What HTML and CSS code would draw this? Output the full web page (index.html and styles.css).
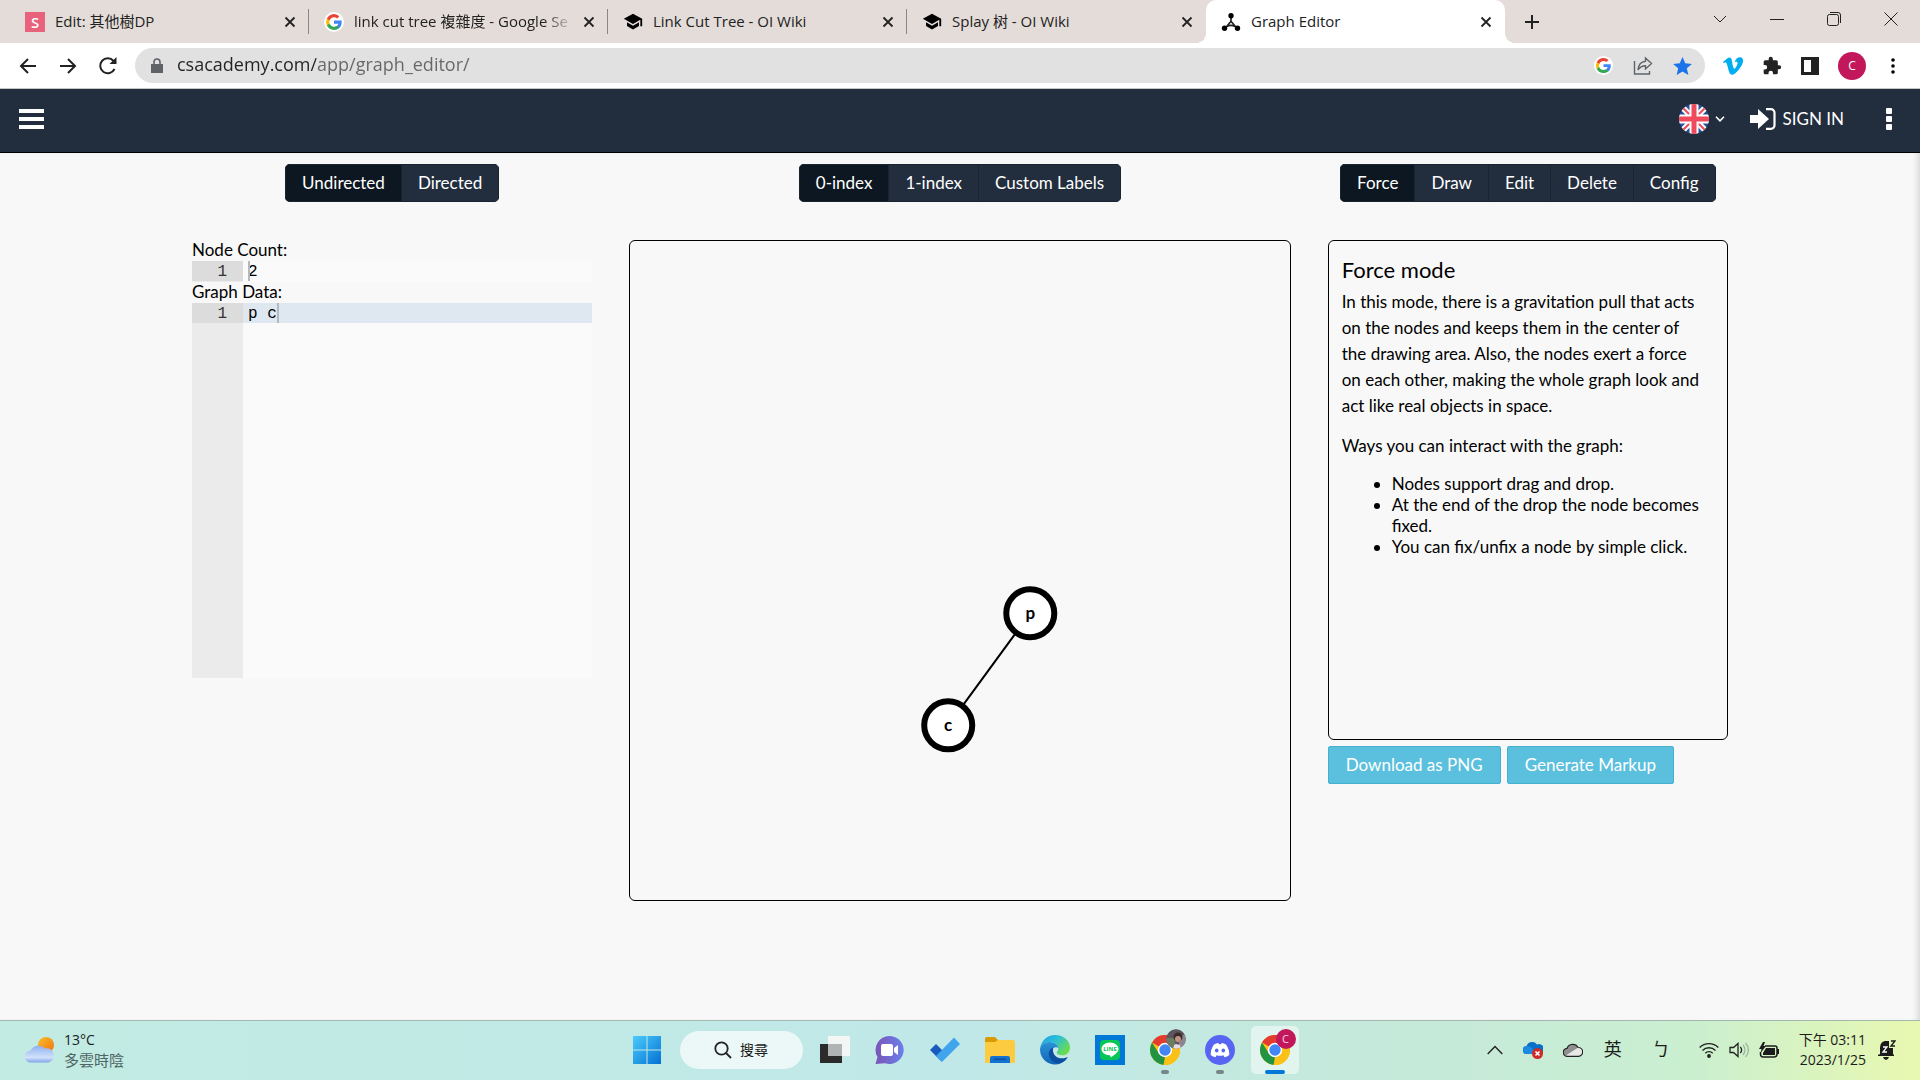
FILE: index.html
```html
<!DOCTYPE html>
<html lang="zh-Hant">
<head>
    <meta charset="UTF-8">
    <meta name="viewport" content="width=device-width, initial-scale=1.0">
    <title>Graph Editor</title>
    <link rel="stylesheet" href="styles.css">
</head>
<body>
    <!-- shared symbols -->
    <svg class="symbols" width="0" height="0" aria-hidden="true">
        <symbol id="google" viewBox="0 0 24 24">
            <circle cx="12" cy="12" r="12" fill="#fff"/>
            <path fill="#4285f4" d="M21.2 12.2c0-.7-.1-1.300-.2-1.900H12v3.700h5.200c-.2 1.200-.9 2.200-1.900 2.900v2.400h3.100c1.800-1.700 2.800-4.100 2.800-7.100z"/>
            <path fill="#34a853" d="M12 21.500c2.600 0 4.700-.9 6.300-2.300l-3.100-2.400c-.8.600-1.900.9-3.200.9-2.500 0-4.600-1.700-5.400-3.900H3.500v2.500C5 19.400 8.300 21.500 12 21.500z"/>
            <path fill="#fbbc05" d="M6.600 13.800a5.700 5.700 0 0 1 0-3.600V7.700H3.500a9.500 9.500 0 0 0 0 8.600l3.100-2.500z"/>
            <path fill="#ea4335" d="M12 6.300c1.400 0 2.700.5 3.700 1.400l2.700-2.700A9.500 9.500 0 0 0 3.500 7.700l3.100 2.500C7.400 8 9.500 6.300 12 6.300z"/>
        </symbol>
        <symbol id="cap" viewBox="0 0 24 24">
            <path d="M12 2 1 8.200l11 6.200 8.800-5V17H23V8.200L12 2z"/>
            <path d="M4.800 12.400v4.300L12 21l7.200-4.300v-4.300L12 16.600l-7.200-4.200z"/>
        </symbol>
        <symbol id="graph" viewBox="0 0 24 24">
            <path d="M12 4v7.500M12 11 4.500 20M12 11l7.500 9M7 17.500q5-3 10 0" fill="none" stroke="currentColor" stroke-width="2"/>
            <circle cx="12" cy="4.500" r="3.200"/>
            <circle cx="4.200" cy="19.500" r="3.200"/>
            <circle cx="19.800" cy="19.500" r="3.200"/>
        </symbol>
        <symbol id="close" viewBox="0 0 12 12">
            <path d="m1.500 1.500 9 9m0-9-9 9" fill="none" stroke="currentColor" stroke-width="1.800"/>
        </symbol>
        <symbol id="chrome" viewBox="0 0 30 30">
            <circle cx="15" cy="15" r="15" fill="#fbc116"/>
            <path fill="#e33b2e" d="M15 15 2 7.500a15 15 0 0 1 26 0z"/>
            <path fill="#229342" d="M2 7.500 8.900 18.500 15 22l-1.500 7.900A15 15 0 0 1 2 7.500z"/>
            <path fill="#fbc116" d="M15 8h13.200A15 15 0 0 1 13.500 30l7.500-12z"/>
            <circle cx="15" cy="15" r="7.200" fill="#fff"/>
            <circle cx="15" cy="15" r="5.700" fill="#4285f4"/>
        </symbol>
    </svg>

    <header class="browser">
        <div class="tab-strip">
            <div class="tab">
                <span class="favicon favicon-s">S</span>
                <span class="tab-title">Edit: 其他樹DP</span>
                <button class="tab-close" aria-label="Close tab"><svg width="12" height="12"><use href="#close"/></svg></button>
            </div>
            <div class="tab">
                <svg class="favicon" width="20" height="20"><use href="#google"/></svg>
                <span class="tab-title faded">link cut tree 複雜度 - Google Se</span>
                <button class="tab-close" aria-label="Close tab"><svg width="12" height="12"><use href="#close"/></svg></button>
            </div>
            <div class="tab">
                <svg class="favicon" width="20" height="20"><use href="#cap"/></svg>
                <span class="tab-title">Link Cut Tree - OI Wiki</span>
                <button class="tab-close" aria-label="Close tab"><svg width="12" height="12"><use href="#close"/></svg></button>
            </div>
            <div class="tab">
                <svg class="favicon" width="20" height="20"><use href="#cap"/></svg>
                <span class="tab-title">Splay 树 - OI Wiki</span>
                <button class="tab-close" aria-label="Close tab"><svg width="12" height="12"><use href="#close"/></svg></button>
            </div>
            <div class="tab active">
                <svg class="favicon" width="20" height="20"><use href="#graph"/></svg>
                <span class="tab-title">Graph Editor</span>
                <button class="tab-close" aria-label="Close tab"><svg width="12" height="12"><use href="#close"/></svg></button>
            </div>
            <button class="new-tab" aria-label="New tab">
                <svg width="16" height="16" viewBox="0 0 16 16"><path d="M8 1v14M1 8h14" stroke="#222" stroke-width="2"/></svg>
            </button>
            <div class="window-controls">
                <button aria-label="Search tabs"><svg width="14" height="14" viewBox="0 0 14 14"><path d="m1 4 6 6 6-6"/></svg></button>
                <button aria-label="Minimize"><svg width="14" height="14" viewBox="0 0 14 14"><path d="M0 7.500h14"/></svg></button>
                <button aria-label="Restore"><svg width="14" height="14" viewBox="0 0 14 14"><rect x=".5" y="2.500" width="11" height="11" rx="2"/><path d="M3 .5h8a2.500 2.500 0 0 1 2.500 2.500v8"/></svg></button>
                <button aria-label="Close"><svg width="14" height="14" viewBox="0 0 14 14"><path d="m.5.5 13 13m0-13-13 13"/></svg></button>
            </div>
        </div>

        <div class="toolbar">
            <div class="history">
                <button aria-label="Back"><svg width="20" height="20" viewBox="0 0 20 20"><path d="M18 10H3m7-7-7 7 7 7"/></svg></button>
                <button aria-label="Forward"><svg width="20" height="20" viewBox="0 0 20 20"><path d="M2 10h15m-7-7 7 7-7 7"/></svg></button>
                <button aria-label="Reload"><svg width="20" height="20" viewBox="0 0 20 20"><path d="M16.500 13A7.500 7.500 0 1 1 15.500 5l2 2"/><path d="M18.500 1v7h-7z" fill="#222" stroke="none"/></svg></button>
            </div>
            <div class="omnibox">
                <svg width="12" height="16" viewBox="0 0 12 16"><path d="M0 6h12v9H0z" fill="#5f6368"/><path d="M3 7V4a3 3 0 0 1 6 0v3" fill="none" stroke="#5f6368" stroke-width="1.600"/></svg>
                <input class="url" type="text" aria-label="Address" value="csacademy.com/app/graph_editor/">
                <button aria-label="Google"><svg width="19" height="19"><use href="#google"/></svg></button>
                <button aria-label="Share"><svg width="20" height="20" viewBox="0 0 20 20" fill="none" stroke="#5f6368" stroke-width="1.400"><path d="M1.500 5v13h15v-3"/><path d="M12.500 2 18.500 7.500l-6 5.500V9.800C8.500 9.800 6.500 11.500 5 14c.3-4.500 2.500-8.300 7.500-8.800z"/></svg></button>
                <button aria-label="Bookmark"><svg width="19" height="18" viewBox="0 0 24 23"><path fill="#1a73e8" d="m12 0 3.500 8 8.500.8-6.500 5.700 2 8.500L12 18.500 4.500 23l2-8.500L0 8.800 8.500 8z"/></svg></button>
            </div>
            <div class="extensions">
                <button aria-label="Vimeo"><svg width="20" height="18" viewBox="0 0 24 21"><path fill="#00adef" d="M24 5c-.1 2.300-1.700 5.500-4.900 9.600C15.800 18.900 13 21 10.700 21c-1.400 0-2.600-1.300-3.600-3.900L5.200 10C4.500 7.400 3.700 6.100 2.900 6.100c-.2 0-.8.400-1.900 1.200L0 5.800c1.200-1 2.400-2.100 3.500-3.200C5.200 1.200 6.400.4 7.200.3c1.900-.2 3.100 1.100 3.500 3.900.5 3.100.8 5 1 5.700.6 2.500 1.200 3.800 1.800 3.800.5 0 1.300-.8 2.300-2.400 1-1.600 1.600-2.800 1.600-3.700.2-1.400-.4-2.100-1.600-2.100-.6 0-1.200.1-1.800.4C15.200 2 17.500 0 20.700.1 23.100.2 24.200 1.800 24 5z"/></svg></button>
                <button aria-label="Extensions"><svg width="20" height="20" viewBox="0 0 24 24"><path fill="#222" d="M20.500 11H19V7a2 2 0 0 0-2-2h-4V3.500a2.500 2.500 0 0 0-5 0V5H4a2 2 0 0 0-2 2v3.800h1.500a2.700 2.700 0 0 1 0 5.400H2V20c0 1.100.9 2 2 2h3.800v-1.500a2.700 2.700 0 0 1 5.400 0V22H17a2 2 0 0 0 2-2v-4h1.500a2.500 2.500 0 0 0 0-5z"/></svg></button>
                <button aria-label="Side panel"><svg width="18" height="18" viewBox="0 0 18 18"><path fill="#222" fill-rule="evenodd" d="M0 0h18v18H0zM3 3v12h7V3z"/></svg></button>
                <button class="profile" aria-label="Profile">C</button>
                <button aria-label="Menu"><svg width="4" height="16" viewBox="0 0 4 16"><circle cx="2" cy="2" r="1.800"/><circle cx="2" cy="8" r="1.800"/><circle cx="2" cy="14" r="1.800"/></svg></button>
            </div>
        </div>
    </header>

    <nav class="navbar">
        <button aria-label="Navigation"><svg width="25" height="20" viewBox="0 0 25 20"><path fill="#fff" d="M0 0h25v4H0zm0 8h25v4H0zm0 8h25v4H0z"/></svg></button>
        <div class="nav-right">
            <button class="language" aria-label="Language">
                <svg width="30" height="30" viewBox="0 0 30 30">
                    <clipPath id="round"><circle cx="15" cy="15" r="15"/></clipPath>
                    <g clip-path="url(#round)">
                        <path fill="#29519c" d="M0 0h30v30H0z"/>
                        <path stroke="#fff" stroke-width="6" d="m2 2 26 26m0-26L2 28"/>
                        <path stroke="#ef4b5c" stroke-width="2" d="m2 2 26 26m0-26L2 28"/>
                        <path stroke="#fff" stroke-width="9" d="M15 0v30M0 15h30"/>
                        <path stroke="#ef4b5c" stroke-width="5" d="M15 0v30M0 15h30"/>
                    </g>
                </svg>
                <svg width="10" height="6" viewBox="0 0 10 6"><path d="m1 .8 4 4 4-4" fill="none" stroke="#fff" stroke-width="1.600"/></svg>
            </button>
            <a class="sign-in" href="#">
                <svg width="26" height="22" viewBox="0 0 26 22"><path fill="#fff" d="M0 7h8V1l11 10L8 21v-6H0z"/><path d="M16 1.200h5a3.500 3.500 0 0 1 3.500 3.500v12.600a3.500 3.500 0 0 1-3.500 3.500h-5" fill="none" stroke="#fff" stroke-width="2.200"/></svg>
                SIGN IN
            </a>
            <button aria-label="More"><svg width="6" height="22" viewBox="0 0 6 22" fill="#fff"><rect width="6" height="6" rx="1"/><rect y="8" width="6" height="6" rx="1"/><rect y="16" width="6" height="6" rx="1"/></svg></button>
        </div>
    </nav>

    <main class="page">
        <section>
            <div class="btn-group">
                <button class="selected">Undirected</button>
                <button>Directed</button>
            </div>
            <div class="inputs">
                <label for="nodeCount">Node Count:</label>
                <div class="editor">
                    <div class="gutter"><span>1</span></div>
                    <input id="nodeCount" type="text" value="2">
                    <span class="caret caret-start"></span>
                </div>
                <label for="graphData">Graph Data:</label>
                <div class="editor editor-large">
                    <div class="gutter"><span>1</span></div>
                    <textarea id="graphData" spellcheck="false">p c</textarea>
                    <span class="caret caret-end"></span>
                </div>
            </div>
        </section>

        <section>
            <div class="btn-group">
                <button class="selected">0-index</button>
                <button>1-index</button>
                <button>Custom Labels</button>
            </div>
            <div class="canvas">
                <svg viewBox="0 0 659 659">
                    <line x1="400" y1="372" x2="318" y2="484" stroke="#000" stroke-width="2"/>
                    <g class="node">
                        <circle cx="400" cy="372" r="24"/>
                        <text x="400" y="378">p</text>
                    </g>
                    <g class="node">
                        <circle cx="318" cy="484" r="24"/>
                        <text x="318" y="490">c</text>
                    </g>
                </svg>
            </div>
        </section>

        <section>
            <div class="btn-group">
                <button class="selected">Force</button>
                <button>Draw</button>
                <button>Edit</button>
                <button>Delete</button>
                <button>Config</button>
            </div>
            <div class="info">
                <h3>Force mode</h3>
                <p>In this mode, there is a gravitation pull that acts on the nodes and keeps them in the center of the drawing area. Also, the nodes exert a force on each other, making the whole graph look and act like real objects in space.</p>
                <p>Ways you can interact with the graph:</p>
                <ul>
                    <li>Nodes support drag and drop.</li>
                    <li>At the end of the drop the node becomes fixed.</li>
                    <li>You can fix/unfix a node by simple click.</li>
                </ul>
            </div>
            <div class="actions">
                <button>Download as PNG</button>
                <button>Generate Markup</button>
            </div>
        </section>
    </main>

    <footer class="taskbar">
        <button class="weather">
            <svg width="30" height="26" viewBox="0 0 30 26">
                <defs>
                    <linearGradient id="sun" x1="0" y1="0" x2="1" y2="1"><stop offset="0" stop-color="#f9c02c"/><stop offset="1" stop-color="#f0700e"/></linearGradient>
                    <linearGradient id="cloudFill" x1="0" y1="0" x2="0" y2="1"><stop offset="0" stop-color="#8fb0f0"/><stop offset=".7" stop-color="#d2e1fb"/><stop offset="1" stop-color="#7fa3ea"/></linearGradient>
                </defs>
                <circle cx="21" cy="8" r="8" fill="url(#sun)"/>
                <path fill="url(#cloudFill)" d="M6 25.500a6 6 0 0 1-.5-12A9 9 0 0 1 20 11.500a7.200 7.200 0 1 1 3.500 14z"/>
            </svg>
            <span class="two-lines"><span>13°C</span><span class="muted">多雲時陰</span></span>
        </button>

        <div class="apps">
            <button class="app" aria-label="Start">
                <svg width="30" height="30" viewBox="0 0 30 30">
                    <defs><linearGradient id="win" x1="0" y1="0" x2="1" y2="1"><stop offset="0" stop-color="#4cccfc"/><stop offset="1" stop-color="#0471d3"/></linearGradient></defs>
                    <path fill="url(#win)" d="M1 1h13.500v13.500H1zm14.500 0H29v13.500H15.500zM1 15.500h13.500V29H1zm14.500 0H29V29H15.500z"/>
                </svg>
            </button>
            <button class="search">
                <svg width="18" height="18" viewBox="0 0 18 18" fill="none" stroke="#222" stroke-width="1.800"><circle cx="7.500" cy="7.500" r="6.200"/><path d="m12 12 5 5"/></svg>
                搜尋
            </button>
            <button class="app" aria-label="Task view">
                <svg width="30" height="30" viewBox="0 0 30 30"><path fill="#2b2b2b" d="M0 9h22v19H0z"/><path fill="#f4f6f6" d="M8 1h22v20H8z"/><path fill="#b0b4b4" d="M8 9h14v12H8z"/></svg>
            </button>
            <button class="app" aria-label="Chat">
                <svg width="30" height="30" viewBox="0 0 30 30">
                    <defs><linearGradient id="chat" x1="0" y1="0" x2="1" y2="0"><stop offset="0" stop-color="#7a55b8"/><stop offset="1" stop-color="#6a80ea"/></linearGradient></defs>
                    <path fill="url(#chat)" d="M15 1a14 14 0 1 1-5 27.200L.5 29l2-7A14 14 0 0 1 15 1z"/>
                    <rect x="6" y="9" width="12" height="12" rx="2" fill="#fff"/><path fill="#fff" d="m19 13 4-3v10l-4-3z"/>
                </svg>
            </button>
            <button class="app" aria-label="To Do">
                <svg width="30" height="30" viewBox="0 0 30 30"><path fill="#185abd" d="m0 15 6-6 11.500 11.500-6 6z"/><path fill="#41a5ee" d="M24 2.500 30 9 12 27l-6-6z"/></svg>
            </button>
            <button class="app" aria-label="File Explorer">
                <svg width="30" height="30" viewBox="0 0 30 30"><path fill="#d99a06" d="M0 4q0-2 2-2h8l3 3v5H0z"/><path fill="#fccb3f" d="M0 7h10l3-2h15q2 0 2 2v21H0z"/><path fill="#1272cf" d="M5 28v-5q0-2 2-2h16q2 0 2 2v5z"/><path fill="#0d4f9a" d="M9 23.500h12V25H9z"/></svg>
            </button>
            <button class="app" aria-label="Edge">
                <svg width="30" height="30" viewBox="0 0 30 30">
                    <defs>
                        <linearGradient id="edgeTop" x1="0" y1="0" x2="1" y2=".6"><stop offset="0" stop-color="#1f9be0"/><stop offset=".5" stop-color="#2bc0d8"/><stop offset="1" stop-color="#6bdc4c"/></linearGradient>
                        <linearGradient id="edgeLow" x1="0" y1="0" x2="0" y2="1"><stop offset="0" stop-color="#2a92d6"/><stop offset="1" stop-color="#1265b8"/></linearGradient>
                    </defs>
                    <path fill="url(#edgeTop)" d="M0 14C1 6 7 0 15 0c9 0 15 6 15 12.500 0 5-3.500 7.800-7.500 7.800-3.800 0-5.800-1.500-5.800-2.500s1.600-1.600 1.600-4.500C18 9 13 6.500 9 7 4 7.500 1 10.500 0 14z"/>
                    <path fill="url(#edgeLow)" d="M0 15C0 10 5 7 9.500 7c5 0 8.500 3 8.800 6-1.500-1.500-6.300-1-6.300 4 0 6 5 11 9 11.200A15 15 0 0 1 0 15z"/>
                    <path fill="#0c4fa0" d="M13 12.500c-5 2-5.500 8-1.500 12.500 3 3.500 7.500 4 10 3 3-1.500 5-3.500 6.300-6-6 3-16 1.500-14.800-9.500z"/>
                </svg>
            </button>
            <button class="app" aria-label="LINE">
                <svg width="30" height="30" viewBox="0 0 30 30"><path fill="#0078d7" d="M0 0h30v30H0z"/><rect x="5" y="5" width="20" height="20" rx="4" fill="#06c755"/><path fill="#fff" d="M15 7.500c5 0 8.500 3 8.500 6.500 0 3.300-4.500 6.500-8 8.500.4-2-.2-2.200-1.500-2.300C9.500 20 6.500 17.300 6.500 14c0-3.500 3.500-6.500 8.500-6.500z"/><text x="15" y="16" class="line-text">LINE</text></svg>
            </button>
            <button class="app running" aria-label="Chrome">
                <svg width="30" height="30"><use href="#chrome"/></svg>
                <svg class="badge" width="20" height="20" viewBox="0 0 20 20"><clipPath id="photo"><circle cx="10" cy="10" r="10"/></clipPath><g clip-path="url(#photo)"><path fill="#5c5560" d="M0 0h20v20H0z"/><path fill="#6c7c62" d="M0 9h9v11H0z"/><path fill="#8d8592" d="M13 6h7v14h-7z"/><circle cx="12" cy="8" r="4.500" fill="#3a2a28"/><circle cx="12" cy="10" r="3" fill="#c09482"/><path fill="#e5dce2" d="M7 20q1-5 3-5l4 1 1 4z"/></g></svg>
            </button>
            <button class="app running" aria-label="Discord">
                <svg width="30" height="30" viewBox="0 0 30 30"><circle cx="15" cy="15" r="15" fill="#5865f2"/><path fill="#fff" d="M9 9.500q2-1.200 4.300-1.500l.7 1.300h2l.7-1.300q2.300.3 4.300 1.500 3.500 5 3.300 10.500-2.300 1.800-4.800 2.200l-1-1.900q-3.500 1-7 0l-1 1.900Q8 21.800 5.700 20 5.500 14.500 9 9.500z"/><ellipse cx="11.700" cy="15.500" rx="1.800" ry="2" fill="#5865f2"/><ellipse cx="18.300" cy="15.500" rx="1.800" ry="2" fill="#5865f2"/></svg>
            </button>
            <button class="app running current" aria-label="Chrome">
                <svg width="30" height="30"><use href="#chrome"/></svg>
                <span class="badge badge-c">C</span>
            </button>
        </div>

        <div class="tray">
            <button aria-label="Hidden icons"><svg width="16" height="10" viewBox="0 0 16 10"><path d="m.7 9 7.300-7.500L15.300 9" fill="none" stroke="#222" stroke-width="1.400"/></svg></button>
            <button aria-label="OneDrive"><svg width="20" height="18" viewBox="0 0 20 18"><path fill="#0a6fc8" d="M4 13a4 4 0 0 1-.5-8A6 6 0 0 1 14 3.500 5 5 0 0 1 18 13z"/><path fill="#1c8ae0" d="M4 13a4 4 0 0 1 0-8q3 0 5 2l4 6z"/><circle cx="14.500" cy="12.500" r="5.500" fill="#cf2a27"/><path d="m12.500 10.500 4 4m0-4-4 4" stroke="#fff" stroke-width="1.600"/></svg></button>
            <button aria-label="Cloud"><svg width="20" height="14" viewBox="0 0 20 14"><path fill="#e8e8e8" d="M4.500 13.300a4 4 0 0 1-.4-8A6 6 0 0 1 15 4.500a4.400 4.400 0 0 1 .5 8.800z"/><path fill="#909090" d="M3 12.500a3.500 3.500 0 0 1 1.500-7A5.500 5.500 0 0 1 14.500 5l-4 2.500z"/><path fill="none" stroke="#222" stroke-width="1.200" d="M4.500 13.300a4 4 0 0 1-.4-8A6 6 0 0 1 15 4.500a4.400 4.400 0 0 1 .5 8.800z"/></svg></button>
            <button class="ime">英</button>
            <button class="ime">ㄅ</button>
            <button class="status" aria-label="Network, volume and battery">
                <svg width="20" height="16" viewBox="0 0 20 16" fill="none" stroke="#222" stroke-width="1.400"><path d="M.7 5.500a13.200 13.200 0 0 1 18.600 0M3.500 8.500a9.200 9.200 0 0 1 13 0M6.300 11.200a5.200 5.200 0 0 1 7.400 0"/><circle cx="10" cy="14" r="1.200" fill="#222"/></svg>
                <svg width="20" height="16" viewBox="0 0 20 16" fill="none" stroke="#222" stroke-width="1.300"><path d="M1 5.500h3.500L9 1.500v13l-4.500-4H1z"/><path d="M11.300 5a4.500 4.500 0 0 1 0 6"/><path d="M14 3a7.500 7.500 0 0 1 0 10M16.500 1a10 10 0 0 1 0 14" stroke="#9bb59f"/></svg>
                <svg width="20" height="16" viewBox="0 0 20 16"><path d="M6 4h10q2 0 2 2v6q0 3-3 3H4q-2.500 0-2.500-3v-2" fill="none" stroke="#1b1b1b" stroke-width="1.500"/><path fill="#1b1b1b" d="M7 6h9v7H4v-2zM18 7h2v5h-2zM4 0 0 7h2.500L1.500 11 7 4H4.500L6 0z"/></svg>
            </button>
            <button class="clock two-lines"><span>下午 03:11</span><span>2023/1/25</span></button>
            <button aria-label="Notifications"><svg width="18" height="20" viewBox="0 0 18 20"><path fill="#1b1b1b" d="M2 14V8q0-6 5-7h4v7h4v6l1 1v1H0v-1zM5 17h6q-1 3-3 3t-3-3z"/><path d="M5 7h4l-4 5h4" fill="none" stroke="#fff" stroke-width="1.300"/><path d="M13 1h4l-4 5h4" fill="none" stroke="#1b1b1b" stroke-width="1.400"/></svg></button>
        </div>
    </footer>
</body>
</html>
```

FILE: styles.css
```css
* {
    box-sizing: border-box;
}
body {
    margin: 0;
    min-height: 100vh;
    display: flex;
    flex-direction: column;
    background-color: #f8f8f8;
    color: #000;
    font-family: Lato, "Noto Sans CJK TC", sans-serif;
    font-size: 17px;
    line-height: 21px;
}
button {
    padding: 0;
    border: none;
    background: none;
    color: inherit;
    font: inherit;
    cursor: pointer;
    display: flex;
    align-items: center;
    justify-content: center;
}
svg {
    display: block;
    flex: none;
}
.symbols {
    position: absolute;
}

/* browser window */
.browser {
    font-family: "Open Sans", "Noto Sans CJK TC", sans-serif;
    color: #222;
}
.tab-strip {
    display: flex;
    height: 43px;
    padding-left: 10px;
    background-color: #e4dcd9;
}
.tab {
    flex: 0 1 299px;
    display: flex;
    align-items: center;
    min-width: 0;
    padding: 0 13px 0 15px;
    position: relative;
    font-size: 15px;
}
.tab:not(.active)::after {
    content: "";
    position: absolute;
    right: 0;
    top: 9px;
    height: 25px;
    border-right: 1px solid #8c8683;
}
.tab:nth-child(4)::after {
    display: none;
}
.tab.active {
    background-color: #fff;
    border-radius: 10px 10px 0 0;
}
.tab.active::before,
.tab.active::after {
    content: "";
    position: absolute;
    bottom: 0;
    width: 10px;
    height: 10px;
}
.tab.active::before {
    right: 100%;
    background: radial-gradient(circle at 0 0, transparent 10px, #fff 10px);
}
.tab.active::after {
    left: 100%;
    background: radial-gradient(circle at 100% 0, transparent 10px, #fff 10px);
}
.favicon {
    width: 20px;
    height: 20px;
    flex: none;
}
.favicon-s {
    background-color: #e8627c;
    color: #fff;
    text-align: center;
    font-weight: 600;
    line-height: 20px;
}
.tab-title {
    flex: 1;
    min-width: 0;
    margin: 0 4px 0 10px;
    overflow: hidden;
    white-space: nowrap;
}
.faded {
    -webkit-mask-image: linear-gradient(to left, transparent 5px, #000 35px);
    mask-image: linear-gradient(to left, transparent 5px, #000 35px);
}
.new-tab {
    width: 54px;
}
.window-controls {
    display: flex;
    margin-left: auto;
    padding-right: 1px;
    height: 37px;
}
.window-controls button {
    width: 57px;
}
.window-controls svg {
    fill: none;
    stroke: #222;
}
.toolbar {
    display: flex;
    align-items: center;
    height: 46px;
    padding: 0 19px 0 8px;
    background-color: #fff;
    border-bottom: 1px solid #c6c6c2;
}
.history {
    display: flex;
    margin-right: 7px;
}
.history button {
    width: 40px;
    height: 36px;
}
.history svg {
    fill: none;
    stroke: #222;
    stroke-width: 2;
}
.omnibox {
    flex: 1;
    display: flex;
    align-items: center;
    gap: 20px;
    height: 35px;
    padding: 0 13px 0 16px;
    border-radius: 18px;
    background-color: #e1e1e1;
}
.url {
    flex: 1;
    min-width: 0;
    margin-left: -6px;
    padding: 0 0 2px;
    border: none;
    outline: none;
    font: inherit;
    font-size: 18px;
    color: transparent;
    background: linear-gradient(to right, #222 139px, #666 139px);
    -webkit-background-clip: text;
    background-clip: text;
}
.extensions {
    display: flex;
    align-items: center;
    gap: 19px;
    margin-left: 18px;
}
.extensions button:last-child {
    width: 16px;
}
.profile {
    width: 28px;
    height: 28px;
    border-radius: 50%;
    background-color: #c2185b;
    color: #fff;
    font-size: 12px;
}

/* site navigation */
.navbar {
    display: flex;
    align-items: center;
    justify-content: space-between;
    height: 64px;
    padding: 0 28px 4px 19px;
    background-color: #222e3e;
    border-bottom: 1px solid #000;
    color: #fff;
}
.nav-right {
    display: flex;
    align-items: center;
    gap: 25px;
}
.language {
    gap: 6px;
}
.sign-in {
    display: flex;
    align-items: center;
    gap: 7px;
    margin-right: 17px;
    color: #fff;
    text-decoration: none;
}

/* graph editor */
.page {
    flex: 1;
    display: grid;
    grid-template-columns: 400fr 661fr 400fr;
    align-items: start;
    gap: 37px;
    padding: 11px 10% 40px;
    box-shadow: inset -6px 0 6px -4px rgba(0, 0, 0, 0.15);
}
.btn-group {
    display: flex;
    width: max-content;
    margin: 0 auto 38px;
    border-radius: 5px;
    overflow: hidden;
}
.btn-group button {
    height: 38px;
    padding: 0 16px 2px;
    border: 1px solid #1a2532;
    border-left-width: 0;
    background-color: #222e3e;
    color: #fff;
}
.btn-group button:first-child {
    border-left-width: 1px;
}
.btn-group .selected {
    background-color: #0c1721;
}
.inputs label {
    display: block;
    height: 21px;
    line-height: 19px;
}
.editor {
    display: flex;
    position: relative;
    height: 21px;
    background-color: #fafafa;
    font-family: "Liberation Mono", monospace;
    font-size: 16px;
    line-height: 22px;
}
.editor-large {
    height: 375px;
}
.gutter {
    width: 51px;
    background-color: #ebebeb;
    color: #333;
    text-align: right;
}
.gutter span {
    display: block;
    height: 20px;
    padding-right: 16px;
    background-color: #dcdcdc;
}
.editor input,
.editor textarea {
    flex: 1;
    min-width: 0;
    padding: 0 5px;
    border: none;
    outline: none;
    resize: none;
    background: none;
    color: #000;
    font: inherit;
}
.editor textarea {
    background: linear-gradient(#dfe7f1, #dfe7f1) no-repeat 0 0 / 100% 20px;
}
.caret {
    position: absolute;
    top: 0;
    width: 2px;
    height: 20px;
    background-color: #b4b8bf;
}
.caret-start {
    left: 56px;
}
.caret-end {
    left: 85px;
}
.canvas,
.info {
    border: 1px solid #000;
    border-radius: 6px;
}
.canvas svg {
    width: 100%;
    height: auto;
}
.node circle {
    fill: #fff;
    stroke: #000;
    stroke-width: 6;
}
.node text {
    font-size: 17px;
    font-weight: 700;
    text-anchor: middle;
}
.info {
    min-height: 500px;
    padding: 16px 20px 16px 13px;
}
.info h3 {
    margin: 0 0 6px;
    font-size: 22px;
    font-weight: 400;
    line-height: 26px;
}
.info p {
    margin: 0 0 14px;
    line-height: 26px;
}
.info ul {
    margin: 0;
    padding-left: 50px;
}
.actions {
    display: flex;
    gap: 6px;
    margin-top: 6px;
}
.actions button {
    height: 38px;
    padding: 0 17px 2px;
    border: 1px solid #46b0d0;
    border-radius: 2px;
    background-color: #5bc0de;
    color: #fff;
}

/* taskbar */
.taskbar {
    display: grid;
    grid-template-columns: 1fr auto 1fr;
    align-items: center;
    height: 60px;
    padding: 0 24px 2px 25px;
    border-top: 1px solid #a3b8b1;
    background: linear-gradient(to right, #c2ebe3, #c0e8e8 50%, #c6ead8 76%, #caefd0 88%, #e8f8b0);
    color: #1b1b1b;
    font-family: "Open Sans", "Noto Sans CJK TC", sans-serif;
    font-size: 14px;
}
.weather {
    gap: 9px;
    justify-self: start;
}
.two-lines {
    display: flex;
    flex-direction: column;
    align-items: flex-start;
    line-height: 20px;
}
.muted {
    color: #4e6663;
    font-size: 15px;
}
.apps {
    display: flex;
    align-items: center;
    gap: 7px;
}
.app {
    position: relative;
    width: 48px;
    height: 48px;
    border-radius: 5px;
}
.app.current {
    background-color: rgba(255, 255, 255, 0.5);
}
.running::after {
    content: "";
    position: absolute;
    bottom: 0;
    left: 20px;
    width: 8px;
    height: 4px;
    border-radius: 2px;
    background-color: #76868a;
}
.current::after {
    left: 14px;
    width: 20px;
    background-color: #0078d7;
}
.badge {
    position: absolute;
    top: 3px;
    right: 3px;
    width: 20px;
    height: 20px;
    border-radius: 50%;
}
.badge-c {
    background-color: #c2185b;
    color: #f5d5e2;
    font-size: 11px;
    line-height: 20px;
}
.search {
    gap: 8px;
    width: 123px;
    height: 38px;
    margin: 0 1px 0 2px;
    border-radius: 19px;
    background-color: #ebf8f7;
}
.line-text {
    fill: #06c755;
    font-size: 6px;
    font-weight: 700;
    text-anchor: middle;
}
.tray {
    display: flex;
    align-items: center;
    justify-self: end;
    gap: 20px;
}
.ime {
    width: 20px;
    margin-right: 8px;
    font-size: 18px;
}
.status {
    gap: 10px;
}
.clock {
    align-items: flex-end;
    margin-right: -8px;
}
```
